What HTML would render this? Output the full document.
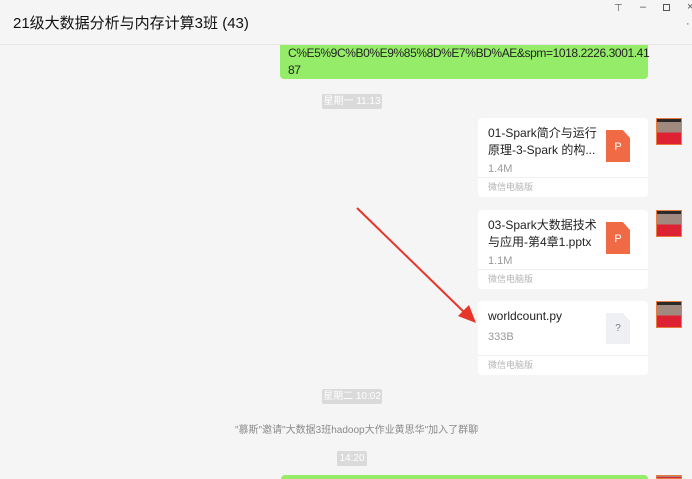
<!DOCTYPE html>
<html style="overflow:hidden;width:692px;height:479px"><head><meta charset="utf-8"><style>
*{margin:0;padding:0;box-sizing:border-box}
body{width:692px;height:479px;background:#f5f5f5;font-family:"Liberation Sans","Noto Sans CJK SC",sans-serif;position:relative;overflow:hidden}
.hdr{position:absolute;left:0;top:0;width:692px;height:45px;border-bottom:1px solid #e6e6e6;background:#f5f5f5}
.title{position:absolute;left:13px;top:12px;font-size:15px;color:#111}
.green{position:absolute;background:#95ec69;border-radius:4px;font-size:12px;color:#222;line-height:17px;padding:0 8px;white-space:nowrap;letter-spacing:-0.4px}
.ts{position:absolute;background:#dadada;color:#fff;font-size:10px;border-radius:2px;height:15px;line-height:15px;text-align:center}
.card{position:absolute;left:478px;width:170px;background:#fff;border-radius:4px}
.card .t{position:absolute;left:10px;top:7px;font-size:12px;line-height:17px;color:#222;width:110px}
.card .s{position:absolute;left:10px;font-size:11px;color:#999}
.card .f{position:absolute;left:0;right:0;bottom:0;height:20px;border-top:1px solid #f0f0f0;font-size:9px;color:#b4b4b4;padding-left:10px;line-height:19px}
.av{position:absolute;left:656px;width:26px;height:27px;background:linear-gradient(#2a2a2a 0 12%,#a08a80 12% 55%,#d23 55%);border:1px solid #e87a40}
.pp{position:absolute;left:128px;width:24px;height:32px;background:#f06a45;clip-path:polygon(0 0,70% 0,100% 25%,100% 100%,0 100%);color:#fff;font-size:11px;text-align:center;line-height:34px}
</style></head><body>
<div class="hdr"><div class="title">21级大数据分析与内存计算3班 (43)</div>
<div style="position:absolute;left:614px;top:3px;font-size:10px;color:#555">⊤</div>
<div style="position:absolute;left:640px;top:1px;font-size:11px;color:#555">–</div>
<div style="position:absolute;left:663px;top:4px;width:7px;height:7px;border:1px solid #555"></div>
<div style="position:absolute;left:687px;top:1px;font-size:11px;color:#555">×</div>
<div style="position:absolute;left:686px;top:18px;font-size:11px;color:#555">·</div>
</div>
<div class="green" style="left:280px;top:45px;width:368px;height:34px;border-radius:0 0 4px 4px">C%E5%9C%B0%E9%85%8D%E7%BD%AE&amp;spm=1018.2226.3001.41<br>87</div>
<div class="ts" style="left:322px;top:94px;width:60px">星期一 11:13</div>

<div class="card" style="top:118px;height:79px"><div class="t">01-Spark简介与运行原理-3-Spark 的构...</div><div class="s" style="top:45px">1.4M</div><div class="pp" style="top:12px">P</div><div class="f">微信电脑版</div></div>
<div class="av" style="top:118px"></div>
<div class="card" style="top:210px;height:79px"><div class="t">03-Spark大数据技术与应用-第4章1.pptx</div><div class="s" style="top:45px">1.1M</div><div class="pp" style="top:12px">P</div><div class="f">微信电脑版</div></div>
<div class="av" style="top:210px"></div>
<div class="card" style="top:301px;height:74px"><div class="t">worldcount.py</div><div class="s" style="top:30px">333B</div>
<div style="position:absolute;left:128px;top:12px;width:24px;height:31px;background:#eef0f3;clip-path:polygon(0 0,70% 0,100% 25%,100% 100%,0 100%);color:#778;font-size:10px;text-align:center;line-height:32px">?</div><div class="f">微信电脑版</div></div>
<div class="av" style="top:301px"></div>

<svg style="position:absolute;left:0;top:0" width="692" height="479"><line x1="357" y1="208" x2="466" y2="314" stroke="#e8352a" stroke-width="2"/><polygon points="476,323 458,316 469,305" fill="#e8352a"/></svg>

<div class="ts" style="left:322px;top:389px;width:60px">星期二 10:02</div>
<div style="position:absolute;left:235px;top:421px;font-size:10px;color:#8a8a8a">"慕斯"邀请"大数据3班hadoop大作业黄思华"加入了群聊</div>
<div class="ts" style="left:337px;top:451px;width:30px">14:20</div>
<div class="green" style="left:281px;top:475px;width:367px;height:4px;padding:0;border-radius:4px 4px 0 0"></div>
<div class="av" style="top:475px;height:4px"></div>
</body></html>
